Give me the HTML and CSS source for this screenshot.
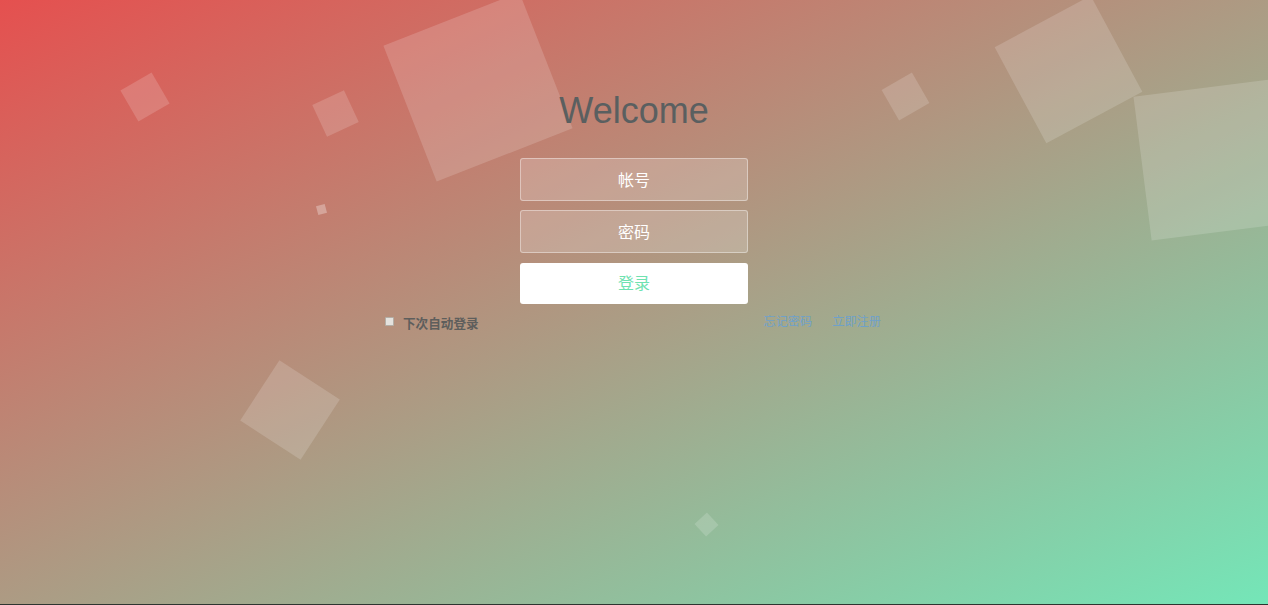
FILE: index.html
```html
<!DOCTYPE html>
<html lang="zh-CN">
<head>
<meta charset="utf-8">
<title>Welcome</title>
<link rel="stylesheet" href="styles.css">
</head>
<body>
<div class="page">
  <ul class="bubbles">
    <li class="b b1"></li>
    <li class="b b2"></li>
    <li class="b b3"></li>
    <li class="b b4"></li>
    <li class="b b5"></li>
    <li class="b b6"></li>
    <li class="b b7"></li>
    <li class="b b8"></li>
    <li class="b b9"></li>
  </ul>
  <div class="login">
    <h1 class="title">Welcome</h1>
    <form class="form">
      <div class="field">帐号</div>
      <div class="field">密码</div>
      <button type="button" class="submit">登录</button>
      <div class="options">
        <label class="remember"><span class="check"></span><span class="remember-text">下次自动登录</span></label>
        <div class="links">
          <a class="link" href="#">忘记密码</a>
          <a class="link" href="#">立即注册</a>
        </div>
      </div>
    </form>
  </div>
</div>
</body>
</html>
```

FILE: styles.css
```css
html, body {
  margin: 0;
  padding: 0;
}
body {
  background: #2d3530;
  font-family: "Liberation Sans", "Noto Sans CJK SC", Arial, sans-serif;
}
.page {
  position: relative;
  height: 604px;
  overflow: hidden;
  background: linear-gradient(to bottom right, #e5504f 0%, #74e6b8 100%);
}
.bubbles {
  list-style: none;
  margin: 0;
  padding: 0;
  position: absolute;
  inset: 0;
}
.b {
  position: absolute;
  background: rgba(255, 255, 255, 0.16);
}
.b1 { left: 127px; top: 78.5px; width: 36px; height: 36px; transform: rotate(-30deg); }
.b2 { left: 317.5px; top: 95.5px; width: 35px; height: 35px; transform: rotate(-25deg); }
.b3 { left: 405px; top: 13.5px; width: 146px; height: 146px; transform: rotate(-21.4deg); }
.b4 { left: 316.5px; top: 204.5px; width: 9px; height: 9px; transform: rotate(-15deg); background: rgba(255,255,255,0.3); }
.b5 { left: 888px; top: 79px; width: 35px; height: 35px; transform: rotate(-30deg); }
.b6 { left: 1014px; top: 15px; width: 109px; height: 109px; transform: rotate(-28.3deg); }
.b7 { left: 1142px; top: 87px; width: 145px; height: 145px; transform: rotate(-7.2deg); }
.b8 { left: 253.5px; top: 373.5px; width: 72px; height: 72px; transform: rotate(33deg); }
.b9 { left: 697.5px; top: 516px; width: 17px; height: 17px; transform: rotate(47deg); }

.login {
  position: relative;
  display: flex;
  flex-direction: column;
  align-items: center;
  padding-top: 93px;
}
.title {
  margin: 0;
  font-family: "Liberation Sans", Arial, sans-serif;
  font-size: 36px;
  line-height: 36px;
  font-weight: normal;
  color: #5a5f60;
}
.form {
  display: flex;
  flex-direction: column;
  align-items: center;
  margin-top: 29px;
}
.field {
  box-sizing: border-box;
  width: 228px;
  height: 43px;
  margin-bottom: 9px;
  padding-bottom: 2px;
  border: 1px solid rgba(255, 255, 255, 0.4);
  border-radius: 3px;
  background: rgba(255, 255, 255, 0.2);
  color: #fff;
  font-family: "Noto Sans CJK SC", sans-serif;
  font-size: 16px;
  display: flex;
  align-items: center;
  justify-content: center;
}
.submit {
  box-sizing: border-box;
  width: 228px;
  height: 41px;
  margin-top: 1px;
  border: 0;
  border-radius: 3px;
  background: #fff;
  color: #6fe2b0;
  font-family: "Noto Sans CJK SC", sans-serif;
  font-size: 16px;
  padding: 0 0 3px 0;
}
.options {
  width: 496px;
  padding-right: 2px;
  margin-top: 11px;
  display: flex;
  justify-content: space-between;
  align-items: center;
}
.remember {
  display: flex;
  align-items: center;
  gap: 9px;
}
.check {
  box-sizing: border-box;
  width: 9px;
  height: 9px;
  border: 1px solid #b3aea6;
  border-radius: 1px;
  background: #e4e2de;
  margin-top: -3px;
}
.remember-text {
  font-family: "Noto Sans CJK SC", sans-serif;
  font-weight: bold;
  font-size: 12.6px;
  color: #5e5e5c;
  line-height: 16px;
}
.links {
  display: flex;
  gap: 20px;
  margin-top: -4px;
}
.link {
  font-family: "Noto Sans CJK SC", sans-serif;
  font-size: 12.2px;
  line-height: 16px;
  color: #6fa1c9;
  text-decoration: none;
}
```
